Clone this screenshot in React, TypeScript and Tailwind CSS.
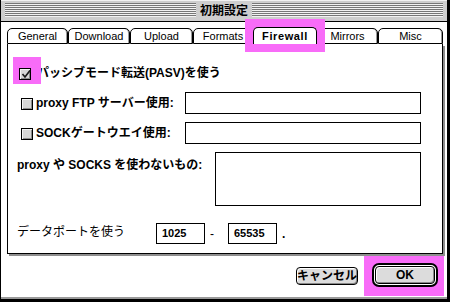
import React from "react";

const tabs = [
  { label: "General", w: "w-[61px]" },
  { label: "Download", w: "w-[62px]" },
  { label: "Upload", w: "w-[63px]" },
  { label: "Formats", w: "w-[60px]" },
  { label: "Firewall", w: "w-[64px]", active: true },
  { label: "Mirrors", w: "w-[61px]" },
  { label: "Misc", w: "w-[65px]" },
];

function Checkbox({ checked }: { checked?: boolean }) {
  return (
    <span className="relative flex h-[12px] w-[12px] shrink-0 border border-black bg-[#d6d6d6] shadow-[inset_1px_1px_0_#f4f4f4,inset_-1px_-1px_0_#8c8c8c]">
      {checked && (
        <svg width="10" height="10" viewBox="0 0 10 10" className="absolute left-[1px] top-[0px]">
          <path d="M1.5 5 L4 8 L9 1.5" stroke="#1a1a1a" strokeWidth="1.7" fill="none" />
        </svg>
      )}
    </span>
  );
}

export default function App() {
  return (
    <div className="h-[302px] w-[453px] bg-white font-['Liberation_Sans','Noto_Sans_CJK_JP',sans-serif] text-black">
      <div className="flex h-[302px] w-[450px] flex-col border-b-[3px] border-l border-r-[3px] border-black bg-white shadow-[inset_0_-2px_0_#9a9a9a]">
        {/* title bar */}
        <div className="h-[22px] shrink-0 border-b border-black bg-[#cecece] px-[4px] pt-[3px] shadow-[inset_0_1px_0_#f2f2f2]">
          <div className="flex h-[14px] justify-center bg-[repeating-linear-gradient(to_bottom,#777_0px,#777_1px,#f2f2f2_1px,#f2f2f2_2px)]">
            <span className="bg-[#cecece] px-[4px] font-['Noto_Sans_CJK_JP',sans-serif] text-[12px] font-bold leading-[14px]">
              初期設定
            </span>
          </div>
        </div>

        {/* tabs */}
        <div className="ml-[6px] mt-[5px] flex h-[17px] items-end">
          {tabs.map((t) =>
            t.active ? (
              <div key={t.label} className={`relative z-10 h-[17px] bg-[#f86cf8] shadow-[0_0_0_8px_#f86cf8] ${t.w}`}>
                <div className="flex h-[17px] items-center justify-center rounded-t-[5px] border border-b-0 border-black bg-white text-[11px] font-bold tracking-[0.6px]">
                  {t.label}
                </div>
              </div>
            ) : (
              <div
                key={t.label}
                className={`flex h-[16px] items-center justify-center rounded-t-[5px] border border-black bg-white text-[11px] shadow-[inset_-1px_0_0_#9a9a9a] ${t.w}`}
              >
                {t.label}
              </div>
            )
          )}
        </div>

        {/* panel */}
        <div className="ml-[6px] flex h-[210px] w-[436px] shrink-0 flex-col border-x border-b border-black bg-white text-[12px] font-bold shadow-[2px_2px_0_#8e8e8e]">
          <div className="mt-[19px] flex h-[20px] items-center">
            <span className="relative ml-[11px] translate-y-[1px]">
              <span className="absolute left-[-6px] top-[-11px] h-[27px] w-[28px] bg-[#f86cf8]" />
              <Checkbox checked />
            </span>
            <span className="ml-[6px]">パッシブモード転送(PASV)を使う</span>
          </div>

          <div className="mt-[9px] flex h-[22px] items-center">
            <div className="ml-[13px] flex w-[164px] items-center">
              <span className="translate-y-[1px]">
                <Checkbox />
              </span>
              <span className="ml-[3px]">proxy FTP サーバー使用:</span>
            </div>
            <div className="h-[22px] w-[236px] border border-black" />
          </div>

          <div className="mt-[8px] flex h-[22px] items-center">
            <div className="ml-[13px] flex w-[164px] items-center">
              <span className="translate-y-[1px]">
                <Checkbox />
              </span>
              <span className="ml-[3px]">SOCKゲートウエイ使用:</span>
            </div>
            <div className="h-[22px] w-[236px] border border-black" />
          </div>

          <div className="mt-[8px] flex h-[54px] items-start">
            <span className="ml-[9px] w-[198px] pt-[5px] leading-[16px]">proxy や SOCKS を使わないもの:</span>
            <div className="h-[54px] w-[206px] border border-black" />
          </div>

          <div className="mt-[17px] flex h-[21px] items-center">
            <span className="ml-[9px] w-[139px] -translate-y-[2px] font-normal">データポートを使う</span>
            <div className="flex h-[21px] w-[49px] items-center border border-black pl-[5px] text-[11px]">1025</div>
            <span className="w-[23px] pl-[5px] font-normal">-</span>
            <div className="flex h-[21px] w-[49px] items-center border border-black pl-[5px] text-[11px]">65535</div>
            <span className="ml-[5px]">.</span>
          </div>
        </div>

        {/* buttons */}
        <div className="mt-[2px] flex items-start justify-end pr-[3px]">
          <div className="mr-[6px] mt-[11px] flex h-[18px] w-[62px] items-center justify-center rounded-[4px] border border-black bg-[#dcdcdc] text-[12px] font-bold shadow-[inset_1px_1px_0_#fff,inset_-1px_-1px_0_#888]">
            キャンセル
          </div>
          <div className="bg-[#f86cf8] pb-[9px] pl-[8px] pr-[6px] pt-[7px]">
            <div className="h-[24px] w-[66px] rounded-[7px] border-[2px] border-black bg-white p-[1px]">
              <div className="flex h-full items-center justify-center rounded-[4px] border border-black bg-[#dcdcdc] text-[12px] font-bold shadow-[inset_1px_1px_0_#fff,inset_-1px_-1px_0_#888]">
                OK
              </div>
            </div>
          </div>
        </div>
      </div>
    </div>
  );
}
